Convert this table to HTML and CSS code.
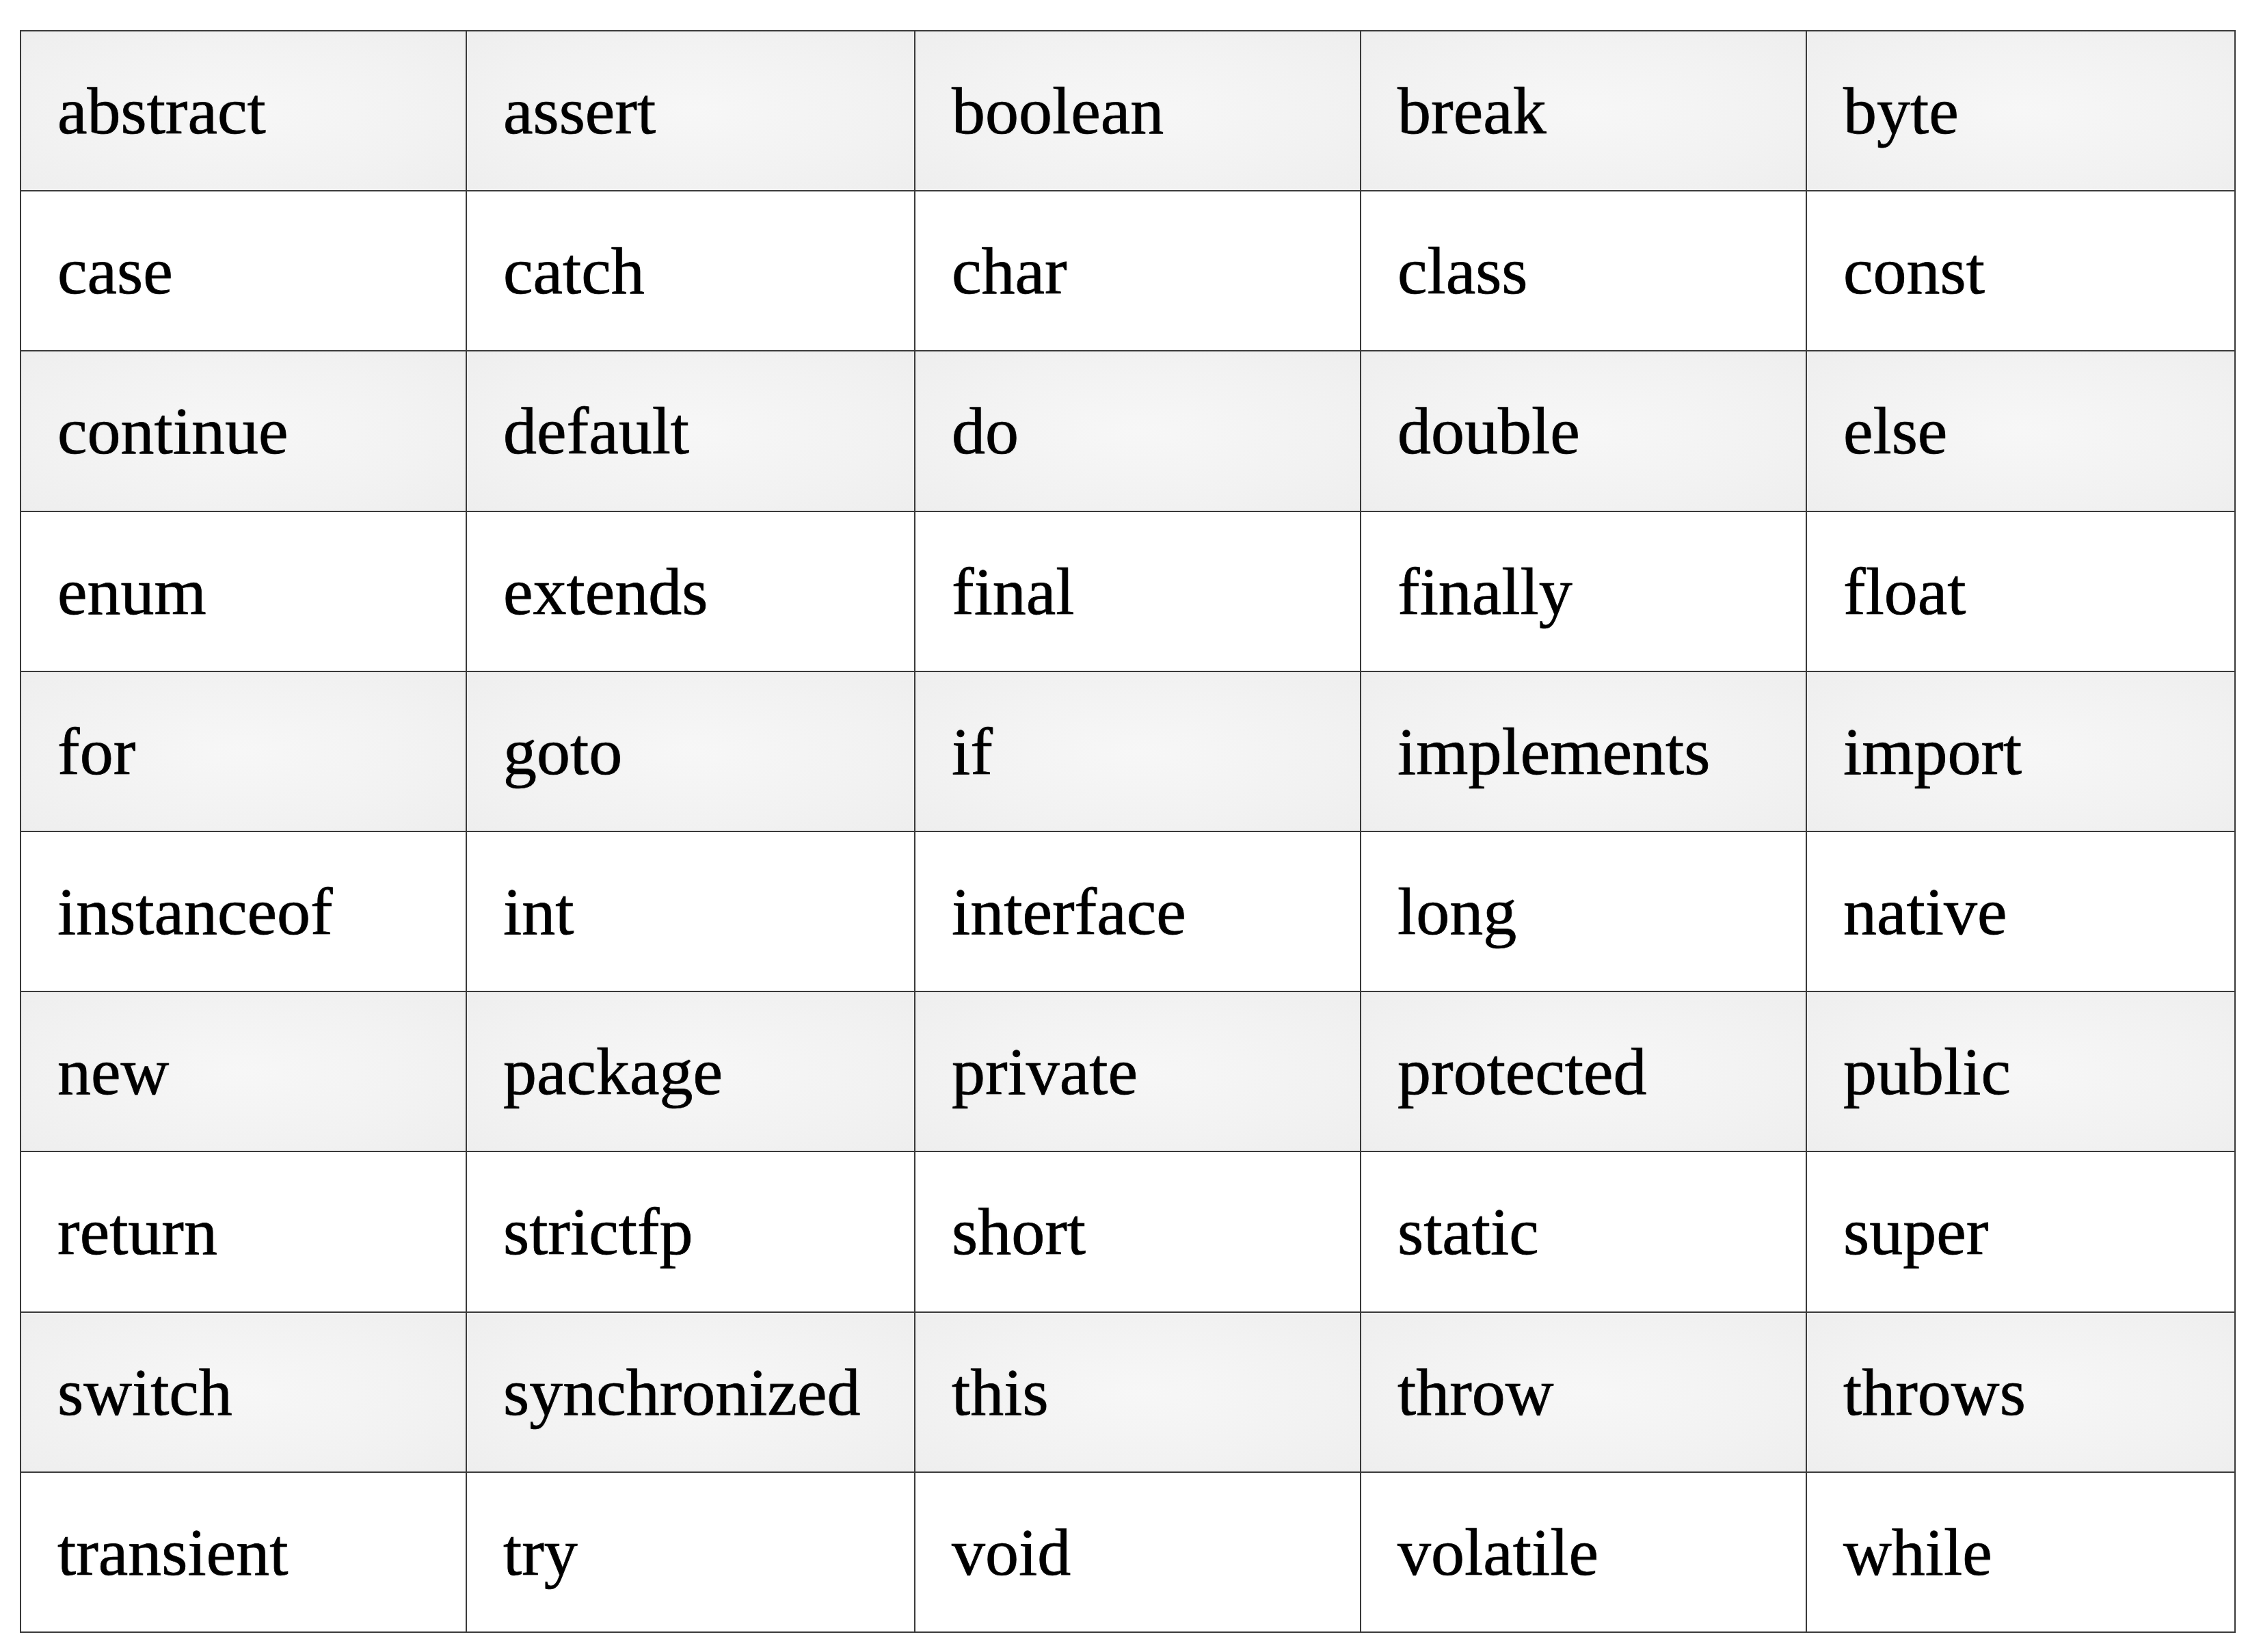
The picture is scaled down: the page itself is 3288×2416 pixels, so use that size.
FILE: index.html
```html
<!DOCTYPE html>
<html lang="en">
<head>
<meta charset="utf-8">
<title>Java keywords</title>
<link rel="stylesheet" href="styles.css">
</head>
<body>
<div class="grid">
  <div class="cell shade">abstract</div><div class="cell shade">assert</div><div class="cell shade">boolean</div><div class="cell shade">break</div><div class="cell shade">byte</div>
  <div class="cell">case</div><div class="cell">catch</div><div class="cell">char</div><div class="cell">class</div><div class="cell">const</div>
  <div class="cell shade">continue</div><div class="cell shade">default</div><div class="cell shade">do</div><div class="cell shade">double</div><div class="cell shade">else</div>
  <div class="cell">enum</div><div class="cell">extends</div><div class="cell">final</div><div class="cell">finally</div><div class="cell">float</div>
  <div class="cell shade">for</div><div class="cell shade">goto</div><div class="cell shade">if</div><div class="cell shade">implements</div><div class="cell shade">import</div>
  <div class="cell">instanceof</div><div class="cell">int</div><div class="cell">interface</div><div class="cell">long</div><div class="cell">native</div>
  <div class="cell shade">new</div><div class="cell shade">package</div><div class="cell shade">private</div><div class="cell shade">protected</div><div class="cell shade">public</div>
  <div class="cell">return</div><div class="cell">strictfp</div><div class="cell">short</div><div class="cell">static</div><div class="cell">super</div>
  <div class="cell shade">switch</div><div class="cell shade">synchronized</div><div class="cell shade">this</div><div class="cell shade">throw</div><div class="cell shade">throws</div>
  <div class="cell">transient</div><div class="cell">try</div><div class="cell">void</div><div class="cell">volatile</div><div class="cell">while</div>
</div>
</body>
</html>
```
FILE: styles.css
```css
html, body {
  margin: 0;
  padding: 0;
  background: #ffffff;
}

body {
  padding: 44px 0 0 29px;
  font-family: "Liberation Serif", "Times New Roman", serif;
}

.grid {
  display: grid;
  grid-template-columns: 650px 654px 650px 650px 625px;
  grid-template-rows: repeat(10, 232.2px);
  gap: 2px;
  width: max-content;
  background: #3a3a3a;
  border: 2px solid #3a3a3a;
}

.cell {
  display: flex;
  align-items: center;
  padding-left: 53px;
  background: #ffffff;
  color: #000000;
  font-size: 98px;
  line-height: 1;
  white-space: nowrap;
  -webkit-text-stroke: 0.7px #000000;
  text-shadow: 0 0 3px rgba(0, 0, 0, 0.15);
}

.cell.shade {
  background: radial-gradient(ellipse at center, #f7f7f7 0%, #f2f2f2 60%, #eeeeee 100%);
}
```
